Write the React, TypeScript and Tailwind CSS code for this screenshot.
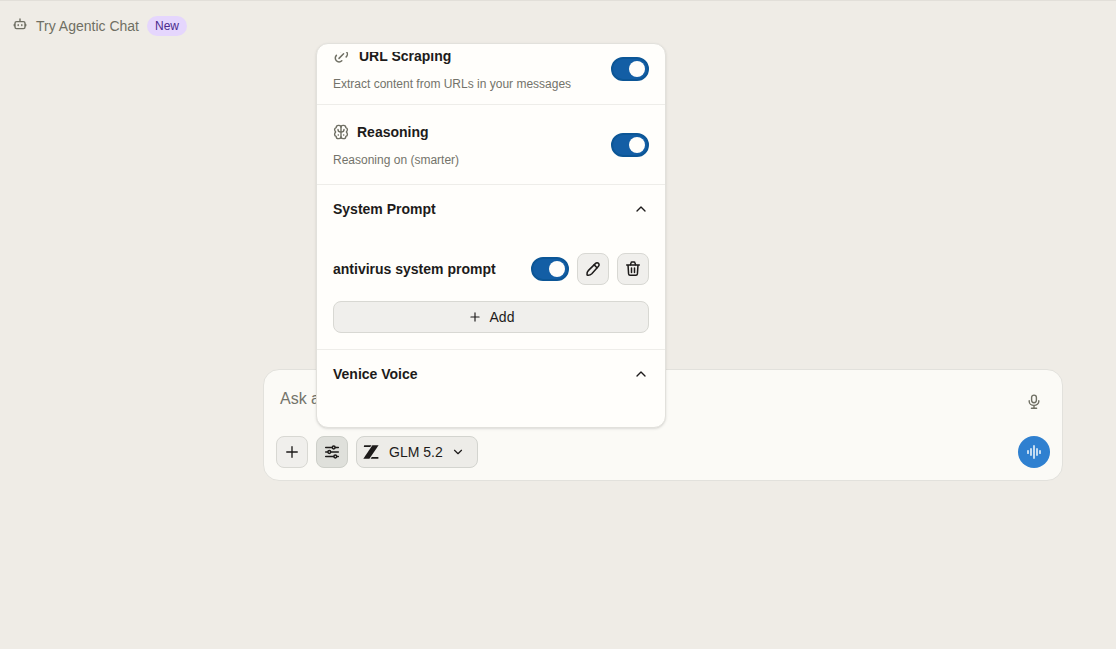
import { useState } from "react";
import type { ReactNode } from "react";
import clsx from "clsx";
import { ChevronDown, ChevronUp, Plus } from "lucide-react";

function BotIcon() {
  return (
    <svg viewBox="0 0 16 16" className="size-4 shrink-0" fill="none" stroke="currentColor" strokeWidth="1.4" strokeLinecap="round">
      <rect x="3" y="3.6" width="10" height="7" rx="1.6" />
      <path d="M8 1v2.4M2.3 6.4v1.4M13.7 6.4v1.4M6.2 6.8v.7M9.8 6.8v.7" />
    </svg>
  );
}

function LinkIcon() {
  return (
    <svg viewBox="0 0 18 18" className="size-[18px] shrink-0" fill="none" stroke="currentColor" strokeWidth="1.5" strokeLinecap="round">
      <path d="M6 11.4l4.6-4.6" />
      <path d="M3.4 8.4A3.8 3.8 0 1 0 8.8 13.8" />
      <path d="M13.2 9.9A3.8 3.8 0 1 0 7.8 4.4" />
    </svg>
  );
}

function BrainIcon() {
  return (
    <svg viewBox="0 0 16 16" className="size-4 shrink-0" fill="none" stroke="currentColor" strokeWidth="1.4" strokeLinecap="round" strokeLinejoin="round">
      <path d="M8 3.2C8 2 7.2 1.4 6 1.4H5.4C4 1.4 3.2 2.2 3.2 3.6 2 4 1.6 4.8 1.6 5.6c0 1 .4 1.6 1 2.4-.6.8-1 1.4-1 2.4 0 .8.4 1.6 1.6 2 0 1.4.8 2.2 2.2 2.2H6c1.2 0 2-.6 2-1.8z" />
      <path d="M8 3.2c0-1.2.8-1.8 2-1.8h.6c1.4 0 2.2.8 2.2 2.2 1.2.4 1.6 1.2 1.6 2 0 1-.4 1.6-1 2.4.6.8 1 1.4 1 2.4 0 .8-.4 1.6-1.6 2 0 1.4-.8 2.2-2.2 2.2H10c-1.2 0-2-.6-2-1.8" />
      <path d="M5 5.4C5 7 6 8 8 8s3-1 3-2.6M5.2 11h.2M10.6 11h.2" />
    </svg>
  );
}

function PencilIcon() {
  return (
    <svg viewBox="0 0 16 16" className="size-4" fill="none" stroke="currentColor" strokeWidth="1.5" strokeLinejoin="round" strokeLinecap="round">
      <path d="M10.6 2.4a2 2 0 0 1 2.9 2.9L6.8 12.8c-1.2 1.2-2.6 1.6-4 1.5-.6 0-.8-.3-.8-.8-.1-1.5.3-2.9 1.5-4.1z" />
      <path d="M9.2 3.9l2.8 2.8" />
    </svg>
  );
}

function TrashIcon() {
  return (
    <svg viewBox="0 0 16 16" className="size-4" fill="none" stroke="currentColor" strokeWidth="1.5" strokeLinejoin="round" strokeLinecap="round">
      <path d="M1.7 3.9h12.6M3 3.9l.6 9c.1.8.6 1.4 1.4 1.4h6c.8 0 1.3-.6 1.4-1.4l.6-9" />
      <path d="M5.5 3.7l.5-1.8c.1-.5.5-.8 1-.8h2c.5 0 .9.3 1 .8l.5 1.8M6.5 7v4.4M9.5 7v4.4" />
    </svg>
  );
}

function SlidersIcon() {
  return (
    <svg viewBox="0 0 16 16" className="size-4" fill="none" stroke="currentColor" strokeWidth="1.5" strokeLinecap="round">
      <path d="M1.7 3.5h6.3M11.4 3.5h2.9M1.7 8h1.9M7 8h7.3M1.7 12.5h7.9M13 12.5h1.3" />
      <circle cx="9.7" cy="3.5" r="1.4" />
      <circle cx="5.3" cy="8" r="1.4" />
      <circle cx="11.3" cy="12.5" r="1.4" />
    </svg>
  );
}

function ModelLogo() {
  return (
    <svg viewBox="0 0 16 14" className="h-3.5 w-4 shrink-0" fill="currentColor">
      <path d="M1.2 0.3h7.4L7.2 2H.8z" />
      <path d="M9.4 0.3h6.2L6.4 13.7H.3z" />
      <path d="M8.8 12h6.6v1.7H7.6z" />
    </svg>
  );
}

function MicIcon() {
  return (
    <svg viewBox="0 0 16 16" className="size-4" fill="none" stroke="currentColor" strokeWidth="1.4" strokeLinecap="round">
      <rect x="5.6" y="1.1" width="4.8" height="7.6" rx="2.4" />
      <path d="M3.2 6.8v.6a4.8 4 0 0 0 9.6 0v-.6M8 11.6v2.6M5.4 14.2h5.2" />
    </svg>
  );
}

function WaveIcon() {
  return (
    <svg viewBox="0 0 16 16" className="size-4" fill="none" stroke="currentColor" strokeWidth="1.8" strokeLinecap="round">
      <path d="M2 6.8v2.4M5 5v6M8 2v12M11 5v6M14 6.8v2.4" />
    </svg>
  );
}

function Toggle({ label }: { label: string }) {
  const [on, setOn] = useState(true);

  return (
    <label className="relative flex shrink-0 cursor-pointer">
      <input
        type="checkbox"
        aria-label={label}
        checked={on}
        onChange={() => setOn(!on)}
        className="sr-only"
      />
      <span
        className={clsx(
          "flex h-6 w-[38px] items-center rounded-full border-2 px-0.5",
          on ? "justify-end border-[#0c5696] bg-[#135ea5]" : "border-[#b5b5ac] bg-[#c8c8c0]"
        )}
      >
        <span className="size-4 rounded-full bg-[#fffefb]" />
      </span>
    </label>
  );
}

function IconButton({ label, children, active = false }: { label: string; children: ReactNode; active?: boolean }) {
  return (
    <button
      type="button"
      aria-label={label}
      className={clsx(
        "flex size-8 shrink-0 items-center justify-center rounded-lg border",
        active ? "border-[#cdcfc9] bg-[#dfe0db]" : "border-[#d8d8d3] bg-[#f0efec]"
      )}
    >
      {children}
    </button>
  );
}

function FeatureRow({ icon, title, description }: { icon: ReactNode; title: string; description: string }) {
  return (
    <div className="flex items-center justify-between px-4">
      <div className="pb-0.5">
        <div className="flex h-6 items-center gap-2">
          <span className="text-[#6f6f63]">{icon}</span>
          <h3 className="text-sm font-bold">{title}</h3>
        </div>
        <p className="mt-2 text-xs text-[#73736a]">{description}</p>
      </div>
      <Toggle label={title} />
    </div>
  );
}

function SectionHeader({ title }: { title: string }) {
  return (
    <button type="button" className="flex h-12 w-full items-center justify-between">
      <span className="text-sm font-bold">{title}</span>
      <ChevronUp className="size-4" />
    </button>
  );
}

function SettingsPanel() {
  return (
    <div className="absolute bottom-full left-0 mb-2 w-[350px] rounded-xl border border-[#e2e1dc] bg-[#fffefb] py-2 shadow-sm">
      <div className="flex h-[367px] flex-col justify-end overflow-hidden">
        {/* Features */}
        <div className="border-b border-[#eeede9] pb-2.5">
          <FeatureRow icon={<LinkIcon />} title="URL Scraping" description="Extract content from URLs in your messages" />
        </div>
        <div className="border-b border-[#eeede9] pt-[15px] pb-3.5">
          <FeatureRow icon={<BrainIcon />} title="Reasoning" description="Reasoning on (smarter)" />
        </div>

        {/* System prompts */}
        <section className="border-b border-[#eeede9] px-4 pb-4">
          <SectionHeader title="System Prompt" />
          <div className="mt-5 flex items-center gap-2">
            <span className="flex-1 text-sm font-bold">antivirus system prompt</span>
            <Toggle label="antivirus system prompt" />
            <IconButton label="Edit prompt">
              <PencilIcon />
            </IconButton>
            <IconButton label="Delete prompt">
              <TrashIcon />
            </IconButton>
          </div>
          <button type="button" className="mt-4 flex h-8 w-full items-center justify-center gap-2 rounded-lg border border-[#d8d8d3] bg-[#f0efec] text-sm">
            <Plus className="size-3.5" />
            Add
          </button>
        </section>

        {/* Voice */}
        <section className="px-4 pb-[21px]">
          <SectionHeader title="Venice Voice" />
        </section>
      </div>
    </div>
  );
}

function Composer() {
  return (
    <form
      className="w-full max-w-[800px] rounded-2xl border border-[#e2e1dc] bg-[#fbfaf6] p-3"
      onSubmit={(e) => e.preventDefault()}
    >
      <div className="flex h-[54px] gap-2">
        <textarea
          aria-label="Message"
          rows={1}
          placeholder="Ask a question..."
          className="h-8 flex-1 resize-none bg-transparent px-1 pt-[5px] text-base outline-none placeholder:text-[#73736a]"
        />
        <button type="button" aria-label="Dictate" className="mt-1 flex size-8 items-center justify-center text-[#6f6f63]">
          <MicIcon />
        </button>
      </div>
      <div className="flex items-center gap-2">
        <IconButton label="Attach">
          <Plus className="size-[18px]" strokeWidth={1.8} />
        </IconButton>
        <div className="relative">
          <IconButton label="Settings" active>
            <SlidersIcon />
          </IconButton>
          <SettingsPanel />
        </div>
        <button type="button" className="flex h-8 items-center rounded-lg border border-[#d3d4cf] bg-[#edece8] pr-3 pl-1.5 text-sm">
          <ModelLogo />
          <span className="ml-2.5">GLM 5.2</span>
          <ChevronDown className="ml-2 size-3.5" />
        </button>
        <button
          type="button"
          aria-label="Voice mode"
          className="ml-auto flex size-8 items-center justify-center rounded-full bg-[#2f80d0] text-[#d5e6f5]"
        >
          <WaveIcon />
        </button>
      </div>
    </form>
  );
}

export default function App() {
  return (
    <div className="min-h-screen border-t border-[#e2dfd9] bg-[#efece6] font-['Liberation_Sans',Arial,sans-serif] text-[#1d1b1a]">
      <header className="flex h-[50px] items-center px-3">
        <a href="#" className="flex items-center gap-2 text-sm text-[#6f6f63]">
          <BotIcon />
          <span>Try Agentic Chat</span>
          <span className="rounded-full bg-[#e5d6fd] px-2 py-0.5 text-xs text-[#4b2a8c]">New</span>
        </a>
      </header>

      <main className="flex justify-center pt-[318px] pb-12 pl-[210px]">
        <Composer />
      </main>
    </div>
  );
}
